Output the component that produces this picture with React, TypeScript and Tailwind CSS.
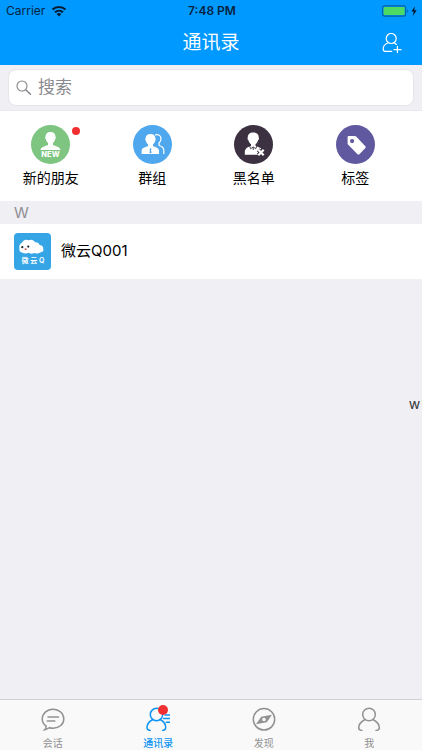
import type { ReactNode } from 'react';

function StatusBar() {
    return (
        <div className="grid grid-cols-3 items-center h-5 pl-1.5 pr-1 text-xs text-[#06233f]">
            <div className="flex items-center gap-1.5">
                <span>Carrier</span>
                <svg className="w-4 h-3" viewBox="0 0 16 12" fill="none" stroke="#031a30" strokeWidth="2.1">
                    <path d="M1.5 4.6a9.4 9.4 0 0 1 13 0M4 7.3a5.8 5.8 0 0 1 8 0" />
                    <path d="M8 11.4 5.6 9.1a3.5 3.5 0 0 1 4.8 0z" fill="#031a30" stroke="none" />
                </svg>
            </div>
            <span className="text-center font-semibold whitespace-nowrap">7:48 PM</span>
            <div className="flex items-center justify-end">
                <svg className="w-9 h-3" viewBox="0 0 36 12">
                    <rect x=".6" y=".9" width="23" height="10.2" rx="2" fill="none" stroke="#0561a5" strokeWidth="1.1" />
                    <rect x="1.6" y="1.9" width="21" height="8.2" rx="1" fill="#4cd964" />
                    <path d="M25.2 4.3c1.5.7 1.5 2.7 0 3.4z" fill="#0561a5" />
                    <path d="M33 1.2 29.4 6.6h2.3l-.9 4.3 4-5.6h-2.5z" fill="#031a30" />
                </svg>
            </div>
        </div>
    );
}

function Header() {
    return (
        <header className="bg-[#0099ff] pt-px">
            <StatusBar />
            <div className="grid grid-cols-3 items-center h-11 px-5 text-white">
                <h1 className="col-start-2 text-center text-[19px] font-normal">通讯录</h1>
                <button aria-label="添加朋友" className="justify-self-end">
                    <svg className="w-5 h-5" viewBox="0 0 20 20" fill="none" stroke="currentColor" strokeWidth="1.2" strokeLinecap="round">
                        <circle cx="9.2" cy="5.5" r="5" />
                        <path d="M6.2 9.8C2.8 11 1.2 13.3 1.2 16c0 1.8.6 2.4 2 2.4h6.500M12.2 9.8l2.2 1.600M15.400 13.400v6.600M12 16.700h7" />
                    </svg>
                </button>
            </div>
        </header>
    );
}

function SearchBar() {
    return (
        <div className="px-2 py-1 border-b border-[#e9e9ee]">
            <label className="flex items-center gap-1.5 h-[37px] px-[7px] bg-white border border-[#e5e5ea] rounded-lg">
                <svg className="w-4 h-4 shrink-0" viewBox="0 0 16 16" fill="none" stroke="#85858a" strokeWidth="1.1" strokeLinecap="round">
                    <circle cx="6" cy="6" r="5" />
                    <path d="m9.7 9.7 4.8 4.600" strokeWidth="1.500" />
                </svg>
                <input
                    type="search"
                    aria-label="搜索"
                    placeholder="搜索"
                    className="w-full min-w-0 text-[17px] outline-none placeholder:text-[#8a8a8f]"
                />
            </label>
        </div>
    );
}

const actions: { label: string; color: string; dot?: boolean; icon: ReactNode }[] = [
    {
        label: '新的朋友',
        color: 'bg-[#7ec582]',
        dot: true,
        icon: (
            <>
                <path d="M19.500 7c3.300 0 5 1.800 4.900 4.600.7.300.6 1.900-.3 2.600-.4 1.700-1.200 2.900-2.100 3.700v2.200c2.600 1.300 6.800 1.700 7.600 4.900H9.400c.8-3.200 5-3.600 7.600-4.900v-2.200c-.9-.8-1.700-2-2.100-3.700-.9-.7-1-2.300-.3-2.600C14.500 8.800 16.200 7 19.500 7z" fill="#fff" />
                <text x="19.500" y="32.200" textAnchor="middle" fill="#fff" fontSize="7.500" fontWeight="800">NEW</text>
            </>
        ),
    },
    {
        label: '群组',
        color: 'bg-[#4fa8ee]',
        icon: (
            <>
                <path d="M17.500 9c3.300 0 5 1.800 4.900 4.600.6.400.5 1.800-.3 2.400-.4 1.600-1.200 2.700-2.100 3.400v1.500c2.300 1.200 5.500 1.500 6 4.600v3.500H8.600v-3.500c.5-3.100 4.100-3.400 6.400-4.600v-1.500c-.9-.7-1.700-1.800-2.100-3.400-.8-.6-.9-2-.3-2.400C12.500 10.800 14.200 9 17.500 9z" fill="#fff" />
                <path d="m17.500 23 1 1.200-.6 1.200.8 2-1.200 1.100-1.200-1.100.8-2-.6-1.200z" fill="#4fa8ee" />
                <path d="M22 9.800c3.900-.9 6.200 1 5.900 4.200.4 1.800-1.200 3-2 4.200l.3 2.300c2.800.8 4.600 2.100 4.600 4.900v3.600" fill="none" stroke="#fff" strokeWidth="1.200" />
            </>
        ),
    },
    {
        label: '黑名单',
        color: 'bg-[#3b3140]',
        icon: (
            <>
                <path d="M19.300 7.500c3.700 0 5.600 2.100 5.400 5 .5.500.4 1.900-.5 2.500-.5 1.900-1.500 3.300-2.700 4.200v1.600l5.500 2.500v6.400H10.800v-3.200c.5-3.200 3.200-4.500 6.200-5.700v-1.600c-1.200-.9-2.200-2.300-2.700-4.200-.9-.6-1-2-.5-2.500-.2-2.900 1.800-5 5.500-5z" fill="#fff" />
                <path d="m15.500 20.800 1.200 3 2.500-1.900 2.500 1.900 1.200-3M19.200 22v3" fill="none" stroke="#3b3140" strokeWidth=".9" />
                <path d="m24.300 24.800 5.400 5.400M29.700 24.800l-5.400 5.400" stroke="#3b3140" strokeWidth="4" />
                <path d="m24.300 24.800 5.400 5.400M29.700 24.800l-5.400 5.400" stroke="#fff" strokeWidth="2.200" />
            </>
        ),
    },
    {
        label: '标签',
        color: 'bg-[#61599f]',
        icon: (
            <path
                fillRule="evenodd"
                d="M12.500 11h6.300c.6 0 1 .2 1.400.6l9.100 9.600c.6.600.6 1.200.1 1.800l-6 6.300c-.6.600-1.300.6-1.900 0l-9.300-9.500c-.4-.4-.6-.8-.6-1.400v-6.500c0-.6.300-.9.900-.9zm3.600 3a2.100 2.100 0 1 0 0 4.200 2.100 2.100 0 0 0 0-4.200z"
                fill="#fff"
            />
        ),
    },
];

function QuickActions() {
    return (
        <div className="grid grid-cols-4 pr-4 pt-3.5 pb-[11px] bg-white">
            {actions.map((a) => (
                <button key={a.label} className="flex flex-col items-center gap-0.5">
                    <span className={`relative w-[39px] h-[39px] rounded-full ${a.color}`}>
                        <svg className="w-full h-full" viewBox="0 0 39 39">{a.icon}</svg>
                        {a.dot && <span className="absolute top-0.5 -right-2.5 w-2 h-2 rounded-full bg-[#f03030]" />}
                    </span>
                    <span className="text-sm leading-6">{a.label}</span>
                </button>
            ))}
        </div>
    );
}

function ContactList() {
    return (
        <section>
            <h2 className="h-[23px] px-3.5 text-[15px] leading-[23px] text-[#8e8e93]">W</h2>
            <a href="#weiyun" className="flex items-center gap-2.5 h-[55px] px-3.5 bg-white">
                <svg className="w-[37px] h-[37px] rounded" viewBox="0 0 37 37">
                    <rect width="37" height="37" fill="#35a5e5" />
                    <path d="M8 19.500c-2.300-.6-3-2.200-2.500-3.800-.8-2.900.4-5.200 2.600-5.900.8-2.800 4-3.700 6.500-2.500 2.500-1.300 5.500-.1 6.400 1.900 2.500-.2 4 1.100 4.600 2.800 2.800.2 3.900 2 3.500 3.600 1 1.800-.2 3.600-2.200 3.600-2.300 1.400-4.900 1.600-6.800.8-1.900 1.100-3.800.9-5.200-.2-2.400 1-5.100 1-6.900-.3z" fill="#fff" />
                    <circle cx="8.300" cy="14.200" r="1.100" fill="#16222b" />
                    <circle cx="14.300" cy="13.600" r="1.100" fill="#16222b" />
                    <path d="M10.500 15.600h2.200c-.1 2-2.100 2-2.200 0z" fill="#d9474a" />
                    <text x="19" y="30" textAnchor="middle" fontSize="7" fontWeight="600" fill="#fff" xmlSpace="preserve">微 云 Q</text>
                </svg>
                <span className="text-[15px]">微云Q001</span>
            </a>
        </section>
    );
}

const tabs: { label: string; active?: boolean; icon: ReactNode }[] = [
    {
        label: '会话',
        icon: (
            <path d="M5.200 19.200C2.700 17.500 1.200 15 1.200 12.100 1.200 6.600 6 2.200 12 2.200s10.800 4.400 10.800 9.700-4.600 9.300-10.500 9.300c-1.400 0-2.700-.1-3.800-.5-1.600 1-3.100 1.700-4.800 2.100 1-1.200 1.400-2.300 1.500-3.600zM7 10h10.500M6.300 14h7.500" />
        ),
    },
    {
        label: '通讯录',
        active: true,
        icon: (
            <>
                <circle cx="10.500" cy="7.500" r="6.200" />
                <path d="M6.800 12.500C3 14.500 1 17.500 1 20.800c0 1.500 1 2.500 3.200 2.600M14.200 12.500c3.800 2 5.500 5 5.500 8.300 0 1.500-.9 2.500-3 2.600M19 8h5M17.500 11.500h6.500M20.300 15.200H24" />
            </>
        ),
    },
    {
        label: '发现',
        icon: (
            <>
                <circle cx="12" cy="12.300" r="10.700" />
                <path fillRule="evenodd" d="M20 7.800 14.800 15.200 4 17.200l5.200-7.400zM12 10.700a1.800 1.800 0 1 0 0 3.600 1.800 1.800 0 0 0 0-3.600z" fill="currentColor" stroke="none" />
            </>
        ),
    },
    {
        label: '我',
        icon: (
            <>
                <circle cx="12" cy="7.500" r="6.300" />
                <path d="M8 12.500c-3.700 2-6.300 5-6.300 8.200 0 1.600 1 2.600 3.300 2.700M16 12.500c3.700 2 6.300 5 6.300 8.200 0 1.600-1 2.600-3.300 2.700" />
            </>
        ),
    },
];

function TabBar() {
    return (
        <nav className="grid grid-cols-4 h-[51px] pt-[7px] bg-[#f9f9f9] border-t border-[#cfcfd4]">
            {tabs.map((t) => (
                <button
                    key={t.label}
                    className={`flex flex-col items-center gap-1 ${t.active ? 'text-[#0d93f2] font-medium' : 'text-[#929292]'}`}
                >
                    <span className="relative h-6">
                        <svg className="w-6 h-6" viewBox="0 0 24 24" fill="none" stroke="currentColor" strokeWidth="1.500" strokeLinecap="round">
                            {t.icon}
                        </svg>
                        {t.active && <span className="absolute -top-0.5 right-0.5 w-2.5 h-2.5 rounded-full bg-[#f03030]" />}
                    </span>
                    <span className="text-[10px] leading-4">{t.label}</span>
                </button>
            ))}
        </nav>
    );
}

export default function App() {
    return (
        <div className="flex flex-col min-h-screen bg-[#efeff4] text-black font-[Inter,'Noto_Sans_CJK_SC',sans-serif]">
            <Header />
            <SearchBar />
            <main className="relative flex-1">
                <QuickActions />
                <ContactList />
                <div className="absolute inset-y-0 right-0.5 flex items-center">
                    <button className="text-[11px] font-medium text-[#3c3c3f]">W</button>
                </div>
            </main>
            <TabBar />
        </div>
    );
}
